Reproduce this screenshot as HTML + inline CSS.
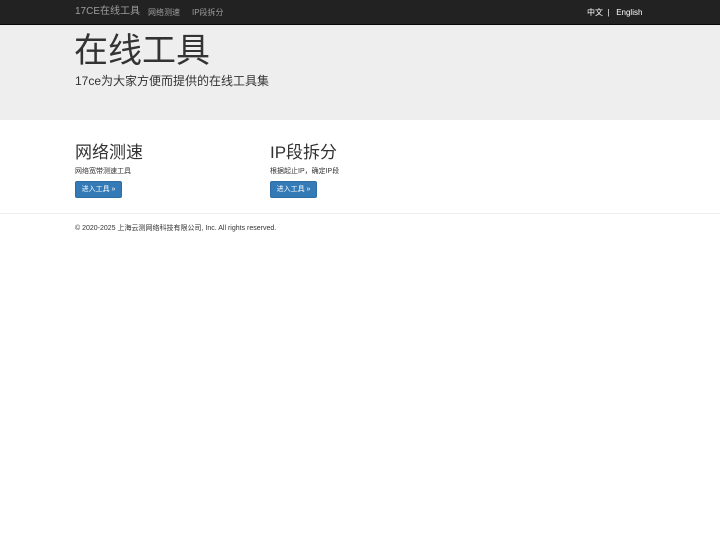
<!DOCTYPE html>
<html><head><meta charset="utf-8"><style>
*{margin:0;padding:0;box-sizing:border-box}
body{width:720px;height:540px;background:#fff;font-family:"Liberation Sans","Noto Sans CJK SC",sans-serif;color:#333;position:relative;overflow:hidden}
.nav{position:absolute;left:0;top:0;width:720px;height:25px;background:#222;border-bottom:1px solid #080808}
.nav span{position:absolute;top:7px;color:#9d9d9d;font-size:8px;line-height:11px}
.jum{position:absolute;left:0;top:25px;width:720px;height:95px;background:#eee}
.a{position:absolute;white-space:nowrap}
.btn{position:absolute;width:47px;height:17px;background:#337ab7;border:1px solid #2e6da4;border-radius:2px;color:#fff;font-size:7px;line-height:15px;text-align:center}
</style></head><body>
<div class="nav">
<span style="left:75px;font-size:10px;top:6px;">17CE在线工具</span>
<span style="left:148px">网络测速</span>
<span style="left:192px">IP段拆分</span>
<span style="left:587px;color:#fff">中文 &nbsp;| &nbsp; English</span>
</div>
<div class="jum">
<div class="a" style="left:74px;top:6px;font-size:34px;line-height:40px">在线工具</div>
<div class="a" style="left:75px;top:48px;font-size:12px;line-height:16px">17ce为大家方便而提供的在线工具集</div>
</div>
<div class="a" style="left:75px;top:143px;font-size:17px;line-height:20px">网络测速</div>
<div class="a" style="left:75px;top:167px;font-size:7px;line-height:9px">网络宽带测速工具</div>
<div class="btn" style="left:75px;top:181px">进入工具 »</div>
<div class="a" style="left:270px;top:143px;font-size:17px;line-height:20px">IP段拆分</div>
<div class="a" style="left:270px;top:167px;font-size:7px;line-height:9px">根据起止IP，确定IP段</div>
<div class="btn" style="left:270px;top:181px">进入工具 »</div>
<div style="position:absolute;left:0;top:213px;width:720px;border-top:1px solid #eee"></div>
<div class="a" style="left:75px;top:224px;font-size:7px;line-height:9px">© 2020-2025 上海云测网络科技有限公司, Inc. All rights reserved.</div>
</body></html>
